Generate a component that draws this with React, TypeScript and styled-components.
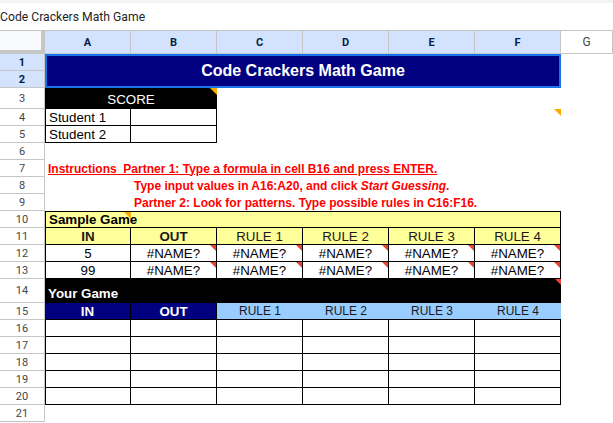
import React from 'react';
import styled, { createGlobalStyle, css } from 'styled-components';

const GlobalStyle = createGlobalStyle`
  html, body {
    margin: 0;
    padding: 0;
    background: #ffffff;
  }
  body {
    font-family: Arial, "Liberation Sans", sans-serif;
    overflow: hidden;
  }
`;

const COLS = ['A', 'B', 'C', 'D', 'E', 'F'];
const ROW_HEIGHTS = [17, 17, 21, 17, 17, 17, 17, 17, 17, 17, 17, 17, 17, 24, 17, 17, 17, 17, 17, 17, 17];

const Page = styled.div`
  width: 613px;
  height: 423px;
  overflow: hidden;
`;

const TitleBar = styled.div`
  height: 27px;
  border-top: 3px solid #f1f3f4;
  display: flex;
  align-items: center;
  font-family: Roboto, "Liberation Sans", sans-serif;
  font-size: 12.2px;
  color: #1f1f1f;
  white-space: nowrap;
`;

const Sheet = styled.div`
  display: grid;
  grid-template-columns: 45px repeat(6, 86px) 1fr;
  grid-template-rows: 24px ${ROW_HEIGHTS.map((h) => `${h}px`).join(' ')};
`;

const Corner = styled.div`
  grid-column: 1;
  grid-row: 1;
  background: #f8f9fa;
  border-top: 1px solid #c4c7c5;
  box-shadow: inset -4px -4px 0 0 #c4c7c5;
`;

const ColHead = styled.div<{ $col: number; $active?: boolean }>`
  grid-column: ${(p) => p.$col};
  grid-row: 1;
  display: flex;
  align-items: center;
  justify-content: center;
  border-top: 1px solid #c4c7c5;
  border-right: 1px solid #c4c7c5;
  border-bottom: 1px solid #c4c7c5;
  font-family: Roboto, "Liberation Sans", sans-serif;
  font-size: 11px;
  ${(p) =>
    p.$active
      ? css`
          background: #d3e3fd;
          color: #041e49;
          font-weight: 700;
        `
      : css`
          background: #ffffff;
          color: #444746;
          font-size: 12px;
        `}
`;

const RowHead = styled.div<{ $row: number; $active?: boolean }>`
  grid-column: 1;
  grid-row: ${(p) => p.$row + 1};
  display: flex;
  align-items: center;
  justify-content: center;
  border-right: 1px solid #c4c7c5;
  border-bottom: 1px solid #c4c7c5;
  font-family: Roboto, "Liberation Sans", sans-serif;
  font-size: 11px;
  ${(p) =>
    p.$active
      ? css`
          background: #d3e3fd;
          color: #041e49;
          font-weight: 700;
        `
      : css`
          background: #ffffff;
          color: #444746;
        `}
`;

type CellPos = {
  $col: number;
  $row: number;
  $span?: number;
  $left?: boolean;
  $top?: boolean;
  $right?: boolean;
  $bottom?: boolean;
};

const Cell = styled.div<CellPos>`
  position: relative;
  grid-column: ${(p) => p.$col + 1} / span ${(p) => p.$span || 1};
  grid-row: ${(p) => p.$row + 1};
  display: flex;
  align-items: center;
  box-sizing: border-box;
  font-size: 13.33px;
  color: #000000;
  white-space: nowrap;
  min-width: 0;
  border-left: ${(p) => (p.$left ? '1px solid #000' : 'none')};
  border-top: ${(p) => (p.$top ? '1px solid #000' : 'none')};
  border-right: ${(p) => (p.$right ? '1px solid #000' : 'none')};
  border-bottom: ${(p) => (p.$bottom ? '1px solid #000' : 'none')};
`;

const TitleCell = styled(Cell)`
  grid-row: 2 / span 2;
  justify-content: center;
  background: #000080;
  color: #ffffff;
  font-size: 16px;
  font-weight: 700;
  box-shadow: inset 0 0 0 2px #1a73e8;
`;

const ScoreCell = styled(Cell)`
  justify-content: center;
  background: #000000;
  color: #ffffff;
  padding-top: 1px;
`;

const LabelCell = styled(Cell)`
  padding-left: 3px;
`;

const Instruction = styled(Cell)<{ $underline?: boolean }>`
  padding-left: 3px;
  overflow: visible;
  color: #ff0000;
  font-size: 12px;
  font-weight: 700;
  text-decoration: ${(p) => (p.$underline ? 'underline' : 'none')};

  em {
    font-style: italic;
  }
`;

const SectionTitle = styled(Cell)<{ $dark?: boolean }>`
  padding-left: 3px;
  font-weight: 700;
  background: ${(p) => (p.$dark ? '#000000' : '#ffff99')};
  color: ${(p) => (p.$dark ? '#ffffff' : '#000000')};
  ${(p) =>
    p.$dark &&
    css`
      align-items: flex-end;
      padding-bottom: 2px;
    `}
`;

const HeadCell = styled(Cell)<{ $tone: 'yellow' | 'navy' | 'sky'; $strong?: boolean }>`
  justify-content: center;
  font-weight: ${(p) => (p.$strong ? 700 : 400)};
  background: ${(p) => (p.$tone === 'yellow' ? '#ffff99' : p.$tone === 'navy' ? '#000080' : '#99ccff')};
  color: ${(p) => (p.$tone === 'navy' ? '#ffffff' : '#1a1a1a')};
  font-size: ${(p) => (p.$tone === 'sky' ? '12px' : '13.33px')};
`;

const ValueCell = styled(Cell)`
  justify-content: center;
  background: #ffffff;
`;

const Marker = styled.span<{ $kind: 'note' | 'error' }>`
  position: absolute;
  top: 0;
  right: 0;
  width: 0;
  height: 0;
  border-top: ${(p) => (p.$kind === 'note' ? '7px solid #f9ab00' : '6px solid #ea4335')};
  border-left: ${(p) => (p.$kind === 'note' ? '7px solid transparent' : '6px solid transparent')};
`;

const sampleRows = [
  { row: 12, input: '5' },
  { row: 13, input: '99' },
];

export default function App() {
  return (
    <Page>
      <GlobalStyle />
      <TitleBar>Code Crackers Math Game</TitleBar>
      <Sheet>
        <Corner />
        {COLS.map((c, i) => (
          <ColHead key={c} $col={i + 2} $active>
            {c}
          </ColHead>
        ))}
        <ColHead $col={8}>G</ColHead>
        {ROW_HEIGHTS.map((_, i) => (
          <RowHead key={i} $row={i + 1} $active={i < 2}>
            {i + 1}
          </RowHead>
        ))}

        <TitleCell $col={1} $row={1} $span={6}>
          Code Crackers Math Game
        </TitleCell>

        <ScoreCell $col={1} $row={3} $span={2}>
          SCORE
          <Marker $kind="note" />
        </ScoreCell>
        <LabelCell $col={1} $row={4} $left $right $bottom>
          Student 1
        </LabelCell>
        <LabelCell $col={2} $row={4} $right $bottom />
        <Cell $col={6} $row={4}>
          <Marker $kind="note" />
        </Cell>
        <LabelCell $col={1} $row={5} $left $right $bottom>
          Student 2
        </LabelCell>
        <LabelCell $col={2} $row={5} $right $bottom />

        <Instruction $col={1} $row={7} $underline>
          Instructions&nbsp;&nbsp;Partner 1: Type a formula in cell B16 and press ENTER.
        </Instruction>
        <Instruction $col={2} $row={8}>
          Type input values in A16:A20, and click&nbsp;<em>Start Guessing</em>.
        </Instruction>
        <Instruction $col={2} $row={9}>
          Partner 2: Look for patterns. Type possible rules in C16:F16.
        </Instruction>

        <SectionTitle $col={1} $row={10} $span={6} $left $top $right $bottom>
          Sample Game
        </SectionTitle>
        <Cell $col={1} $row={10} $top>
          <Marker $kind="note" />
        </Cell>
        <HeadCell $col={1} $row={11} $tone="yellow" $strong $left $right $bottom>
          IN
        </HeadCell>
        <HeadCell $col={2} $row={11} $tone="yellow" $strong $right $bottom>
          OUT
        </HeadCell>
        {[1, 2, 3, 4].map((n) => (
          <HeadCell key={n} $col={n + 2} $row={11} $tone="yellow" $right $bottom>
            RULE {n}
          </HeadCell>
        ))}
        {sampleRows.map((r) => (
          <React.Fragment key={r.row}>
            <ValueCell $col={1} $row={r.row} $left $right $bottom>
              {r.input}
            </ValueCell>
            {[2, 3, 4, 5, 6].map((c) => (
              <ValueCell key={c} $col={c} $row={r.row} $right $bottom>
                #NAME?
                <Marker $kind="error" />
              </ValueCell>
            ))}
          </React.Fragment>
        ))}

        <SectionTitle $col={1} $row={14} $span={6} $dark>
          Your Game
          <Marker $kind="error" />
        </SectionTitle>
        <HeadCell $col={1} $row={15} $tone="navy" $strong $right $bottom>
          IN
        </HeadCell>
        <HeadCell $col={2} $row={15} $tone="navy" $strong $right $bottom>
          OUT
        </HeadCell>
        {[1, 2, 3, 4].map((n) => (
          <HeadCell key={n} $col={n + 2} $row={15} $tone="sky" $bottom>
            RULE {n}
          </HeadCell>
        ))}
        {[16, 17, 18, 19, 20].map((row) =>
          [1, 2, 3, 4, 5, 6].map((c) => (
            <ValueCell key={`${row}-${c}`} $col={c} $row={row} $left={c === 1} $right $bottom />
          ))
        )}
      </Sheet>
    </Page>
  );
}
